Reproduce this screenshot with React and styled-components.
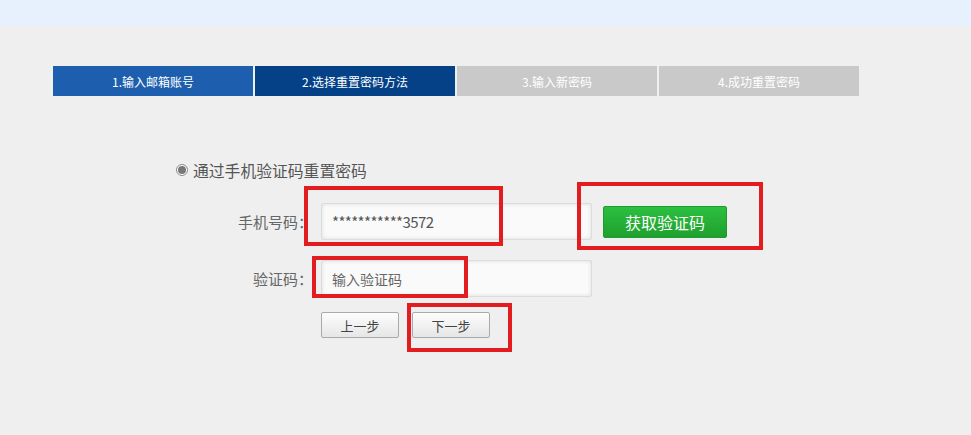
import React from "react";
import styled, { createGlobalStyle } from "styled-components";

const GlobalStyle = createGlobalStyle`
  html, body {
    margin: 0;
    padding: 0;
    background: #efefef;
    font-family: "Noto Sans CJK SC", "Noto Sans", sans-serif;
  }
`;

const Page = styled.div`
  position: relative;
  width: 971px;
  height: 435px;
  overflow: hidden;
  background: #efefef;
`;

const TopBand = styled.div`
  height: 26px;
  background: #e7f1fe;
`;

const Steps = styled.div`
  display: flex;
  gap: 2px;
  margin: 40px 0 0 53px;
`;

const Step = styled.div`
  width: 200px;
  height: 30px;
  display: flex;
  align-items: center;
  justify-content: center;
  font-size: 12px;
  color: #fff;
  background: ${(p) => p.$bg};
`;

const Form = styled.div`
  display: flex;
  flex-direction: column;
  margin-top: 64px;
`;

const RadioRow = styled.label`
  display: flex;
  align-items: center;
  gap: 5px;
  padding-left: 176px;
  height: 20px;
  font-size: 15.8px;
  color: #555;
`;

const RadioDot = styled.span`
  box-sizing: border-box;
  width: 12px;
  height: 12px;
  border-radius: 50%;
  border: 1px solid #8a8a8a;
  background: #fff;
  display: flex;
  align-items: center;
  justify-content: center;
  &::after {
    content: "";
    width: 8px;
    height: 8px;
    border-radius: 50%;
    background: #777;
  }
`;

const Row = styled.div`
  display: flex;
  align-items: center;
  margin-top: ${(p) => p.$mt}px;
`;

const Label = styled.span`
  width: 313px;
  text-align: right;
  font-size: 15px;
  color: #666;
`;

const Input = styled.input`
  box-sizing: border-box;
  width: 271px;
  height: 37px;
  margin-left: 8px;
  padding: 0 10px;
  border: 1px solid #dcdcdc;
  border-radius: 2px;
  background: #fafafa;
  box-shadow: inset 0 0 4px rgba(0, 0, 0, 0.12);
  font-family: inherit;
  font-size: ${(p) => (p.$tight ? 15 : 14)}px;
  letter-spacing: ${(p) => (p.$tight ? "-0.6px" : "0")};
  color: #555;
  outline: none;
  &::placeholder {
    color: #666;
  }
`;

const GreenButton = styled.button`
  box-sizing: border-box;
  width: 124px;
  height: 32px;
  margin-left: 11px;
  border: 1px solid #1f9a2c;
  border-radius: 2px;
  background: linear-gradient(#2cbf40, #1fa02e);
  color: #fff;
  font-family: inherit;
  font-size: 16px;
  cursor: pointer;
`;

const ButtonRow = styled.div`
  display: flex;
  gap: 13px;
  margin: 15px 0 0 321px;
`;

const PlainButton = styled.button`
  box-sizing: border-box;
  width: 78px;
  height: 26px;
  border: 1px solid #aaa;
  border-radius: 2px;
  background: linear-gradient(#fdfdfd, #e6e6e6);
  color: #444;
  font-family: inherit;
  font-size: 13px;
  cursor: pointer;
`;

const Mark = styled.div`
  position: absolute;
  box-sizing: border-box;
  border: 4px solid #e31d1f;
  pointer-events: none;
`;

const steps = [
  { text: "1.输入邮箱账号", bg: "#1d5fae" },
  { text: "2.选择重置密码方法", bg: "#044186" },
  { text: "3.输入新密码", bg: "#c9c9c9" },
  { text: "4.成功重置密码", bg: "#c9c9c9" },
];

const marks = [
  { left: 304, top: 186, width: 199, height: 60 },
  { left: 577, top: 182, width: 186, height: 68 },
  { left: 312, top: 256, width: 156, height: 42 },
  { left: 407, top: 303, width: 105, height: 49 },
];

export default function App() {
  return (
    <Page>
      <GlobalStyle />
      <TopBand />
      <Steps>
        {steps.map((s) => (
          <Step key={s.text} $bg={s.bg}>
            {s.text}
          </Step>
        ))}
      </Steps>
      <Form>
        <RadioRow>
          <RadioDot />
          通过手机验证码重置密码
        </RadioRow>
        <Row $mt={23}>
          <Label>手机号码：</Label>
          <Input $tight defaultValue="***********3572" readOnly />
          <GreenButton>获取验证码</GreenButton>
        </Row>
        <Row $mt={20}>
          <Label>验证码：</Label>
          <Input placeholder="输入验证码" />
        </Row>
        <ButtonRow>
          <PlainButton>上一步</PlainButton>
          <PlainButton>下一步</PlainButton>
        </ButtonRow>
      </Form>
      {marks.map((m, i) => (
        <Mark
          key={i}
          style={{ left: m.left, top: m.top, width: m.width, height: m.height }}
        />
      ))}
    </Page>
  );
}
